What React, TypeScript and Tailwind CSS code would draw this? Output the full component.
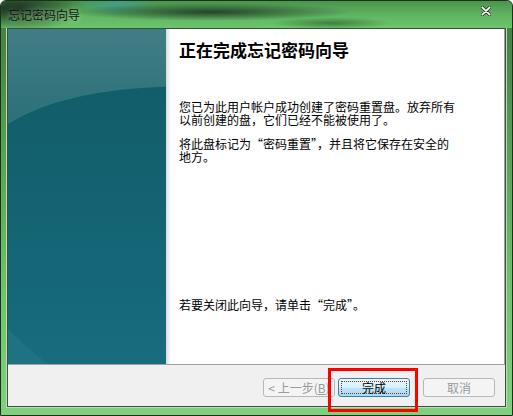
import React from "react";

function SidePanel() {
  return (
    <svg width="158" height="335" viewBox="0 0 158 335" className="block">
      <defs>
        <linearGradient id="topg" x1="0" y1="0" x2="0" y2="1">
          <stop offset="0" stopColor="#407e85" />
          <stop offset="0.3" stopColor="#2c6f77" />
          <stop offset="1" stopColor="#1d6470" />
        </linearGradient>
        <linearGradient id="botg" x1="0" y1="0" x2="0" y2="1">
          <stop offset="0" stopColor="#125d69" />
          <stop offset="0.5" stopColor="#146474" />
          <stop offset="1" stopColor="#176c7e" />
        </linearGradient>
      </defs>
      <rect x="0" y="0" width="158" height="335" fill="url(#topg)" />
      <path d="M0,94 Q55,60 158,57 L158,335 L0,335 Z" fill="url(#botg)" />
      <path d="M0,94 Q55,60 158,57" fill="none" stroke="#2f7a82" strokeWidth="1.5" opacity="0.8" />
      <path d="M0,300 Q20,320 40,335 L0,335 Z" fill="#2a7d88" opacity="0.45" />
    </svg>
  );
}

export default function App() {
  const font = "font-['Noto_Sans_CJK_SC','Liberation_Sans',sans-serif]";
  return (
    <div
      className={`relative w-[513px] h-[416px] flex flex-col rounded-t-[6px] border border-[#1c301c] overflow-hidden bg-[linear-gradient(180deg,#3f7a40_0%,#55a055_35%,#6fc26f_70%,#7fd07f_100%)] ${font}`}
    >
      {/* title bar */}
      <div className="relative h-[27px] flex items-center justify-between pl-[7px] pr-[21px] bg-[radial-gradient(ellipse_70px_22px_at_15px_8px,#15281a,transparent),radial-gradient(ellipse_140px_9px_at_210px_11px,#24432a,transparent),radial-gradient(ellipse_40px_10px_at_115px_4px,#3fa08a,transparent),radial-gradient(ellipse_60px_6px_at_330px_22px,#3f7f44,transparent),linear-gradient(180deg,#4a944d_0%,#62b863_60%,#6cc46c_100%)]">
        <span className="text-[12px] leading-[14px] text-[#0d1a0d] [text-shadow:0_0_6px_rgba(220,255,220,0.8)]">
          忘记密码向导
        </span>
        <svg width="10" height="10" viewBox="0 0 10 10" className="-mt-[8px]">
          <path d="M1,1 L9,9 M9,1 L1,9" stroke="#203020" strokeWidth="3.2" strokeLinecap="round" />
          <path d="M1.3,1.3 L8.7,8.7 M8.7,1.3 L1.3,8.7" stroke="#ffffff" strokeWidth="1.8" strokeLinecap="round" />
        </svg>
      </div>

      {/* client */}
      <div className="flex-1 mx-[6px] mb-[8px] border border-[#3a503a] shadow-[0_0_0_1px_#b6e2b6] bg-[#f0f0f0] flex flex-col">
        <div className="h-[335px] flex">
          <div className="w-[158px] shrink-0">
            <SidePanel />
          </div>
          <div className="flex-1 flex bg-white border-r border-[#a0a0a0]">
            <div className="w-[5px] bg-[linear-gradient(90deg,#dcdcdc,#ffffff)]" />
            <div className="flex-1 flex flex-col pl-[8px] pt-[11px] pb-[53px] text-black">
              <div className="text-[17px] leading-[20px] font-bold whitespace-nowrap">
                正在完成忘记密码向导
              </div>
              <div className="mt-[40px] text-[12px] leading-[13px] whitespace-nowrap">
                您已为此用户帐户成功创建了密码重置盘。放弃所有
                <br />
                以前创建的盘，它们已经不能被使用了。
              </div>
              <div className="mt-[11px] text-[12px] leading-[13px] whitespace-nowrap">
                将此盘标记为“密码重置”，并且将它保存在安全的
                <br />
                地方。
              </div>
              <div className="mt-auto text-[12px] leading-[13px] whitespace-nowrap">
                若要关闭此向导，请单击“完成”。
              </div>
            </div>
          </div>
        </div>
        <div className="h-px bg-[#a0a0a0]" />
        <div className="flex-1 flex justify-end items-start pt-[13px] pr-[10px]">
          <div className="w-[72px] h-[19px] rounded-[3px] border border-[#b8b8b8] bg-[#f4f4f4] flex items-center justify-center text-[12px] leading-none text-[#9a9a9a]">
            &lt; 上一步(<span className="underline">B</span>)
          </div>
          <div className="ml-[3px] w-[72px] h-[19px] rounded-[3px] border border-[#3c7fb1] bg-[linear-gradient(180deg,#eaf6fd_0%,#d9f0fc_50%,#bee6fd_51%,#a7d9f5_100%)] p-[2px]">
            <div className="w-full h-full border border-dotted border-[#7a3a1a] flex items-center justify-center text-[12px] leading-none text-black">
              完成
            </div>
          </div>
          <div className="ml-[13px] w-[72px] h-[19px] rounded-[3px] border border-[#b8b8b8] bg-[#f4f4f4] flex items-center justify-center text-[12px] leading-none text-[#9a9a9a]">
            取消
          </div>
        </div>
      </div>

      {/* red annotation */}
      <div className="absolute left-[327px] top-[367px] w-[90px] h-[44px] border-[3px] border-[#ff0000]" />
    </div>
  );
}
